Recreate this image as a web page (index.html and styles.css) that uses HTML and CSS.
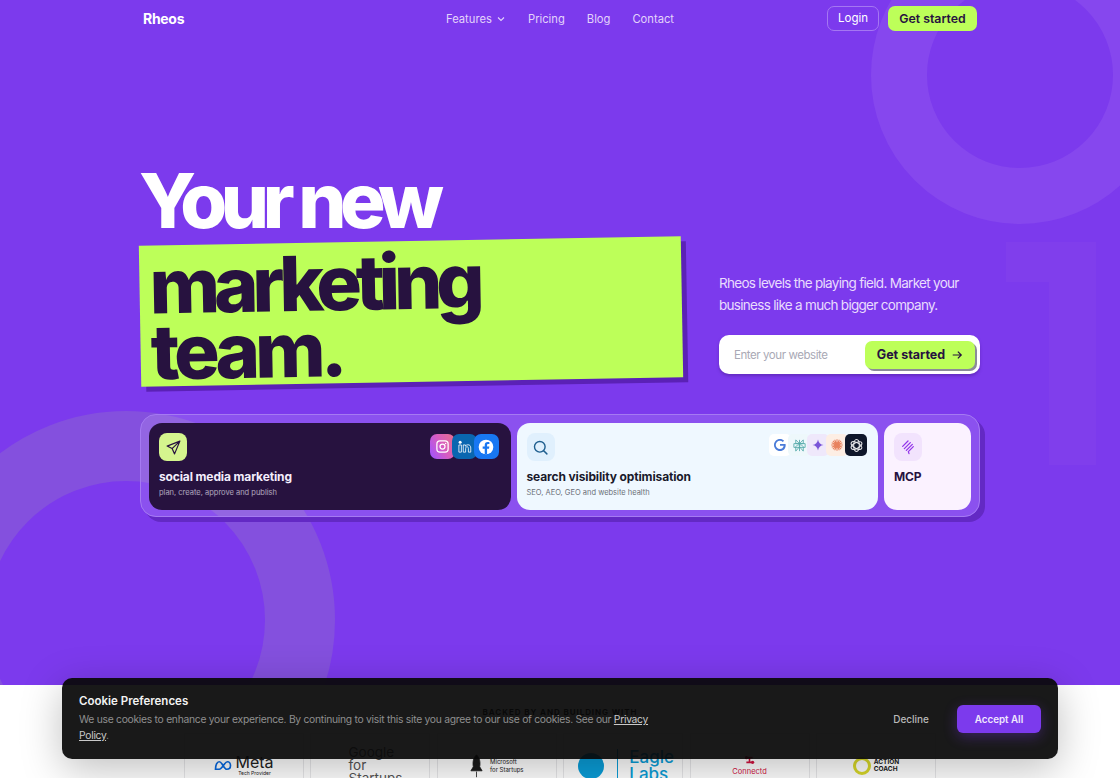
FILE: index.html
```html
<!DOCTYPE html>
<html lang="en">
<head>
  <meta charset="UTF-8" />
  <title>Rheos – Your new marketing team</title>
  <meta name="viewport" content="width=device-width, initial-scale=1" />
  <link rel="stylesheet" href="styles.css">
</head>
<body>
  <section class="hero">
    <svg class="hero-bg" viewBox="0 0 1120 685" aria-hidden="true">
      <circle cx="1020" cy="75" r="121" fill="none" stroke="#8647ee" stroke-width="56" />
      <circle cx="126" cy="620" r="174" fill="none" stroke="#8450de" stroke-width="70" />
      <path d="M1006 242H1096V465H1049V282H1006Z" fill="#803eec" />
    </svg>

    <nav class="nav">
      <a class="logo" href="#">Rheos</a>
      <div class="nav-links">
        <a href="#">Features
          <svg class="chevron" viewBox="0 0 10 10"><path d="M2 3.500 5 6.500 8 3.500" fill="none" stroke="currentColor" stroke-width="1.100" /></svg>
        </a>
        <a href="#">Pricing</a>
        <a href="#">Blog</a>
        <a href="#">Contact</a>
      </div>
      <div class="nav-actions">
        <a class="btn-login" href="#">Login</a>
        <a class="btn-start" href="#">Get started</a>
      </div>
    </nav>

    <div class="hero-main">
      <div class="hero-left">
        <h1 class="title-white">Your new</h1>
        <div class="title-box">
          <div class="title-dark">marketing<br><span class="title-team">team.</span></div>
        </div>
      </div>
      <div class="hero-right">
        <p class="lead">Rheos levels the playing field. Market your business like a much bigger company.</p>
        <form class="cta-form">
          <span class="cta-placeholder">Enter your website</span>
          <button class="cta-btn" type="button">Get started
            <svg viewBox="0 0 14 14" width="12" height="12"><path d="M2 7H12M8 3l4 4-4 4" fill="none" stroke="currentColor" stroke-width="1.400" /></svg>
          </button>
        </form>
      </div>
    </div>

    <div class="cards">
      <div class="card card-dark">
        <div class="card-top">
          <span class="card-icon icon-lime">
            <svg viewBox="0 0 24 24" width="17" height="17"><path d="M21 3 3 10l7 3.500L13.500 21ZM21 3 10 13.500" fill="none" stroke="#27123f" stroke-width="1.700" stroke-linejoin="round" /></svg>
          </span>
          <div class="logos">
            <span class="logo-tile tile-insta">
              <svg viewBox="0 0 24 24" width="15" height="15"><rect x="3" y="3" width="18" height="18" rx="5" fill="none" stroke="#fff" stroke-width="2" /><circle cx="12" cy="12" r="4" fill="none" stroke="#fff" stroke-width="2" /><circle cx="17" cy="7" r="1.200" fill="#fff" /></svg>
            </span>
            <span class="logo-tile tile-linkedin">
              <svg viewBox="0 0 24 24" width="15" height="15"><circle cx="5" cy="5" r="2.400" fill="#fff" /><path d="M3 9.500H7V21H3ZM10 9.500h3.500v2c1-1.500 2.400-2.300 4-2.300 3 0 4.500 2 4.500 5.300V21h-3.800v-6c0-1.600-.7-2.600-2.100-2.600-1.500 0-2.300 1-2.300 2.700V21H10Z" fill="none" stroke="#fff" stroke-width="1.300" /></svg>
            </span>
            <span class="logo-tile tile-facebook">
              <svg viewBox="0 0 24 24" width="16" height="16"><circle cx="12" cy="12" r="11" fill="#fff" /><path d="M13.600 23v-8.300h2.900l.5-3.300h-3.400V9.300c0-1 .5-1.800 1.900-1.800h1.600V4.700c-.8-.1-1.700-.2-2.500-.2-2.800 0-4.500 1.700-4.500 4.500v2.400H7v3.300h3.100V23Z" fill="#1877f2" /></svg>
            </span>
          </div>
        </div>
        <div class="card-title">social media marketing</div>
        <div class="card-sub">plan, create, approve and publish</div>
      </div>

      <div class="card card-light">
        <div class="card-top">
          <span class="card-icon icon-blue">
            <svg viewBox="0 0 24 24" width="17" height="17"><circle cx="11" cy="11" r="7.500" fill="none" stroke="#1f5f8f" stroke-width="2" /><path d="M16.500 16.500 21 21" stroke="#1f5f8f" stroke-width="2" stroke-linecap="round" /></svg>
          </span>
          <div class="logos logos-ai">
            <span class="logo-tile tile-google">
              <svg viewBox="0 0 24 24" width="16" height="16"><path d="M20.500 12.300c0-.7-.1-1.300-.2-1.800H12v2.600h5.500c-.5 3-2.800 5-5.500 5-3.600 0-6.400-2.900-6.400-6.100S8.400 5.700 12 5.700c1.600 0 3 .6 4.200 1.700l1.900-1.900C16.500 3.900 14.500 3 12 3c-5 0-9 4-9 9s4 9 9 9c5.200 0 8.500-3.600 8.500-8.700Z" fill="#4a7bd8" /></svg>
            </span>
            <span class="logo-tile tile-perplex">
              <svg viewBox="0 0 24 24" width="15" height="15"><path d="M12 3v18M6 3l6 6 6-6M6 3v6h12V3M6 21l6-7 6 7M6 21v-7l3-3h6l3 3v7M3 9h18v6H3Z" fill="none" stroke="#55a9a9" stroke-width="1.400" /></svg>
            </span>
            <span class="logo-tile tile-gemini">
              <svg viewBox="0 0 24 24" width="12" height="12"><path d="M12 1c.8 6 5 10.200 11 11-6 .8-10.200 5-11 11-.8-6-5-10.200-11-11 6-.8 10.200-5 11-11Z" fill="#7a55d8" /></svg>
            </span>
            <span class="logo-tile tile-claude">
              <svg viewBox="0 0 24 24" width="14" height="14"><path d="M12 2v20M2 12h20M5 5l14 14M19 5 5 19M8 3l8 18M16 3 8 21M3 8l18 8M21 8 3 16" stroke="#e8825e" stroke-width="1.800" /></svg>
            </span>
            <span class="logo-tile tile-openai">
              <svg viewBox="0 0 24 24" width="15" height="15"><g fill="none" stroke="#e8e8ea" stroke-width="1.700"><ellipse cx="12" cy="12" rx="4.500" ry="9.500" /><ellipse cx="12" cy="12" rx="4.500" ry="9.500" transform="rotate(60 12 12)" /><ellipse cx="12" cy="12" rx="4.500" ry="9.500" transform="rotate(120 12 12)" /></g></svg>
            </span>
          </div>
        </div>
        <div class="card-title">search visibility optimisation</div>
        <div class="card-sub">SEO, AEO, GEO and website health</div>
      </div>

      <div class="card card-pink">
        <div class="card-top">
          <span class="card-icon icon-purple">
            <svg viewBox="0 0 24 24" width="16" height="16"><path d="M4 11 12 3M6.500 14.500 15.500 5.500M9.500 17 18.500 8M12.500 19 20 11.500M12.500 19l1 3" fill="none" stroke="#9333ea" stroke-width="1.900" stroke-linecap="round" /></svg>
          </span>
        </div>
        <div class="card-title">MCP</div>
      </div>
    </div>
  </section>

  <section class="backed">
    <div class="backed-label">BACKED BY AND BUILDING WITH</div>
    <div class="backed-row">
      <div class="backed-logo">
        <svg viewBox="0 0 24 14" width="18" height="11"><path d="M2 12C2 6 4 2 7 2c4 0 6 10 10 10 3 0 5-2 5-5s-2-5-4-5c-4 0-7 10-11 10-3 0-5 0-5 0Z" fill="none" stroke="#0668e1" stroke-width="2.200" /></svg>
        <div class="meta">
          <span class="meta-word">Meta</span>
          <span class="meta-sub">Tech Provider</span>
        </div>
      </div>
      <div class="backed-logo"><span class="gfs">Google<br>for<br>Startups</span></div>
      <div class="backed-logo">
        <svg viewBox="0 0 16 30" width="13" height="24"><path d="M8 1c4 4 5 9 4 15l3 5H1l3-5C3 10 4 5 8 1Zm0 21v7" fill="#1a1a1a" stroke="#1a1a1a" /></svg>
        <span class="ms">Microsoft<br>for Startups</span>
      </div>
      <div class="backed-logo">
        <span class="eagle-mark"></span>
        <span class="eagle">Eagle<br>Labs</span>
      </div>
      <div class="backed-logo backed-col">
        <svg viewBox="0 0 14 12" width="11" height="10"><path d="M3 3h8M3 9h8M7 3v6" stroke="#d3123f" stroke-width="2" /><circle cx="3" cy="3" r="2" fill="#d3123f" /><circle cx="11" cy="9" r="2" fill="#d3123f" /></svg>
        <span class="connectd">Connectd</span>
      </div>
      <div class="backed-logo">
        <span class="ac-ring"></span>
        <span class="ac">ACTION<br>COACH</span>
      </div>
    </div>
  </section>

  <div class="cookie">
    <div class="cookie-text">
      <div class="cookie-title">Cookie Preferences</div>
      <p class="cookie-body">We use cookies to enhance your experience. By continuing to visit this site you agree to our use of cookies. See our <a href="#">Privacy Policy</a>.</p>
    </div>
    <div class="cookie-actions">
      <button class="btn-decline" type="button">Decline</button>
      <button class="btn-accept" type="button">Accept All</button>
    </div>
  </div>
</body>
</html>
```

FILE: styles.css
```css
:root {
  --purple: #7c3aed;
  --lime: #bdff59;
  --ink: #27123f;
}
html, body {
  margin: 0;
  padding: 0;
  height: 100%;
  overflow: hidden;
}
body {
  background: #fff;
  color: #fff;
  font-family: 'Inter', 'Liberation Sans', sans-serif;
  position: relative;
}
a {
  color: inherit;
  text-decoration: none;
}
.hero {
  height: 685px;
  background: var(--purple);
  position: relative;
  overflow: hidden;
  box-sizing: border-box;
  padding: 0 140px;
}
.hero-bg {
  position: absolute;
  top: 0;
  left: 0;
  width: 1120px;
  height: 685px;
}
.nav {
  position: relative;
  height: 37px;
  display: grid;
  grid-template-columns: 1fr auto 1fr;
  align-items: center;
  padding: 0 3px;
}
.logo {
  font-size: 14px;
  font-weight: 700;
  letter-spacing: -0.3px;
}
.nav-links {
  display: flex;
  gap: 22px;
  font-size: 11.200px;
  color: #e3d3fb;
}
.chevron {
  width: 10px;
  height: 10px;
  margin-left: 1px;
  vertical-align: -1px;
}
.nav-actions {
  display: flex;
  gap: 9px;
  align-items: center;
  justify-content: flex-end;
}
.btn-login {
  font-size: 11.500px;
  width: 50px;
  text-align: center;
  height: 23px;
  line-height: 23px;
  border: 1px solid #a577f2;
  border-radius: 7px;
}
.btn-start {
  font-size: 12.300px;
  font-weight: 600;
  width: 89px;
  text-align: center;
  height: 25px;
  line-height: 25px;
  background: var(--lime);
  color: var(--ink);
  border-radius: 7px;
}
.hero-main {
  position: relative;
  margin-top: 124px;
  display: flex;
  justify-content: space-between;
  align-items: flex-end;
}
.hero-left {
  width: 545px;
}
.title-white {
  margin: 0 0 2px -1px;
  font-size: 76px;
  line-height: 78px;
  font-weight: 800;
  letter-spacing: -6.500px;
}
.title-box {
  background: var(--lime);
  height: 141px;
  width: 542px;
  box-sizing: border-box;
  padding: 7px 0 0 10px;
  transform: rotate(-1deg);
  box-shadow: 5px 5px 0 #5b21b6;
}
.title-dark {
  font-size: 76px;
  line-height: 66px;
  font-weight: 800;
  letter-spacing: -6.200px;
  color: var(--ink);
}
.title-team {
  letter-spacing: -5px;
}
.hero-right {
  width: 261px;
  padding-bottom: 8px;
}
.lead {
  margin: 0 0 19px;
  font-size: 13.500px;
  line-height: 22px;
  color: #e9dcfd;
  letter-spacing: -0.7px;
}
.cta-form {
  height: 39px;
  background: #fff;
  border-radius: 10px;
  display: flex;
  align-items: center;
  justify-content: space-between;
  padding: 0 5px 0 15px;
  box-shadow: 0 2px 3px #4c1d9580;
}
.cta-placeholder {
  color: #a9a9b5;
  font-size: 11.500px;
  letter-spacing: -0.43px;
}
.cta-btn {
  height: 28px;
  width: 110px;
  border: none;
  border-radius: 7px;
  background: var(--lime);
  color: var(--ink);
  font-family: inherit;
  font-size: 12.500px;
  font-weight: 700;
  display: flex;
  align-items: center;
  justify-content: center;
  gap: 6px;
  box-shadow: 2px 2px 0 #8b8b99;
}
.cards {
  position: relative;
  margin-top: 32px;
  height: 103px;
  box-sizing: border-box;
  padding: 8px;
  display: flex;
  gap: 6px;
  background: rgba(255, 255, 255, 0.12);
  border: 1px solid #a57af2;
  border-radius: 16px;
  box-shadow: 5px 5px 0 #6329c4;
}
.card {
  border-radius: 13px;
  padding: 10px;
  box-sizing: border-box;
  height: 87px;
  min-width: 0;
}
.card-dark {
  flex: 361.500px 0 0;
  background: #27123f;
  color: #f3eefc;
}
.card-light {
  flex: 361.500px 0 0;
  background: #eff8ff;
  color: #1a1a2b;
}
.card-pink {
  flex: 87px 0 0;
  background: #fbf2ff;
  color: var(--ink);
}
.card-top {
  display: flex;
  justify-content: space-between;
  align-items: flex-start;
  height: 28px;
}
.card-icon {
  width: 28px;
  height: 28px;
  border-radius: 8px;
  display: flex;
  align-items: center;
  justify-content: center;
}
.icon-lime {
  background: #d5f58e;
}
.icon-blue {
  background: #e0f0fd;
}
.icon-purple {
  background: #f2e3fd;
}
.logos {
  display: flex;
  margin: 1px 2px 0 0;
}
.logo-tile {
  width: 25px;
  height: 25px;
  border-radius: 7px;
  display: flex;
  align-items: center;
  justify-content: center;
  margin-left: -3px;
}
.logos-ai {
  margin-right: 1px;
}
.logos-ai .logo-tile {
  width: 22px;
  height: 22px;
  border-radius: 5px;
}
.tile-insta {
  background: linear-gradient(60deg, #a855f7 10%, #d75cc0 50%, #e8708a 100%);
}
.tile-linkedin {
  background: #0a66b0;
}
.tile-facebook {
  background: #1877f2;
}
.tile-google {
  background: #fff;
}
.tile-perplex {
  background: #eef8fb;
}
.tile-gemini {
  background: #efe8fb;
}
.tile-claude {
  background: #fdeee4;
}
.tile-openai {
  background: #0f172a;
}
.card-title {
  margin-top: 8px;
  font-size: 12px;
  font-weight: 700;
  line-height: 15px;
  letter-spacing: -0.13px;
}
.card-sub {
  margin-top: 3px;
  font-size: 7.500px;
  line-height: 11px;
  opacity: 0.65;
}
.backed {
  position: relative;
  height: 93px;
  overflow: hidden;
  color: #1a1a1a;
}
.backed-label {
  padding-top: 22px;
  text-align: center;
  font-size: 8px;
  line-height: 11px;
  font-weight: 700;
  letter-spacing: 0.930px;
}
.backed-row {
  display: flex;
  gap: 6.400px;
  justify-content: center;
  margin-top: 15px;
}
.backed-logo {
  width: 120px;
  height: 64px;
  flex: none;
  box-sizing: border-box;
  border: 1px solid #e8e8ea;
  border-bottom: none;
  display: flex;
  align-items: center;
  justify-content: center;
  gap: 3px;
}
.backed-col {
  flex-direction: column;
  gap: 2px;
}
.meta {
  display: flex;
  flex-direction: column;
  align-items: center;
}
.meta-word {
  font-size: 16px;
  line-height: 15px;
  color: #222;
}
.meta-sub {
  font-size: 5px;
  line-height: 7px;
}
.gfs {
  font-size: 13.500px;
  line-height: 13px;
  color: #555;
  margin-left: 10px;
}
.ms {
  font-size: 6px;
  line-height: 8px;
  margin-left: 4px;
}
.eagle-mark {
  width: 26px;
  height: 26px;
  margin-left: 6px;
  border-radius: 50%;
  background: #0a9ed9;
}
.eagle {
  font-size: 17px;
  line-height: 17px;
  font-weight: 500;
  color: #0a9ed9;
  margin-left: 10px;
  padding-left: 11px;
  border-left: 1px solid #0a9ed9;
}
.connectd {
  font-size: 7.500px;
  line-height: 9px;
  color: #d3123f;
}
.ac-ring {
  width: 18px;
  height: 18px;
  border: 3px solid #d9d92a;
  border-radius: 50%;
  box-sizing: border-box;
}
.ac {
  font-size: 6.500px;
  line-height: 7px;
  font-weight: 700;
}
.cookie {
  position: absolute;
  left: 62px;
  top: 678px;
  width: 996px;
  height: 81px;
  box-sizing: border-box;
  background: rgba(8, 8, 8, 0.93);
  border-radius: 10px;
  padding: 16px 17px 0;
  display: flex;
  justify-content: space-between;
  box-shadow: 0 10px 40px rgba(0, 0, 0, 0.25);
}
.cookie-text {
  width: 575px;
}
.cookie-title {
  font-size: 11.500px;
  font-weight: 600;
  line-height: 15px;
  color: #f2f2f2;
}
.cookie-body {
  margin: 2px 0 0;
  font-size: 10.300px;
  line-height: 16px;
  letter-spacing: -0.27px;
  color: #8f8f8f;
}
.cookie-body a {
  color: #c9c9c9;
  text-decoration: underline;
}
.cookie-actions {
  display: flex;
  align-items: center;
  gap: 28px;
  height: 28px;
  padding-top: 11px;
}
.btn-decline {
  border: none;
  background: none;
  color: #b8b8b8;
  font-family: inherit;
  font-size: 10px;
  font-weight: 500;
  padding: 0;
}
.btn-accept {
  width: 84px;
  height: 28px;
  border: none;
  border-radius: 6px;
  background: var(--purple);
  color: #f0e8fd;
  font-family: inherit;
  font-size: 9.800px;
  font-weight: 600;
  box-shadow: 0 4px 14px #7c3aed55;
}
```
